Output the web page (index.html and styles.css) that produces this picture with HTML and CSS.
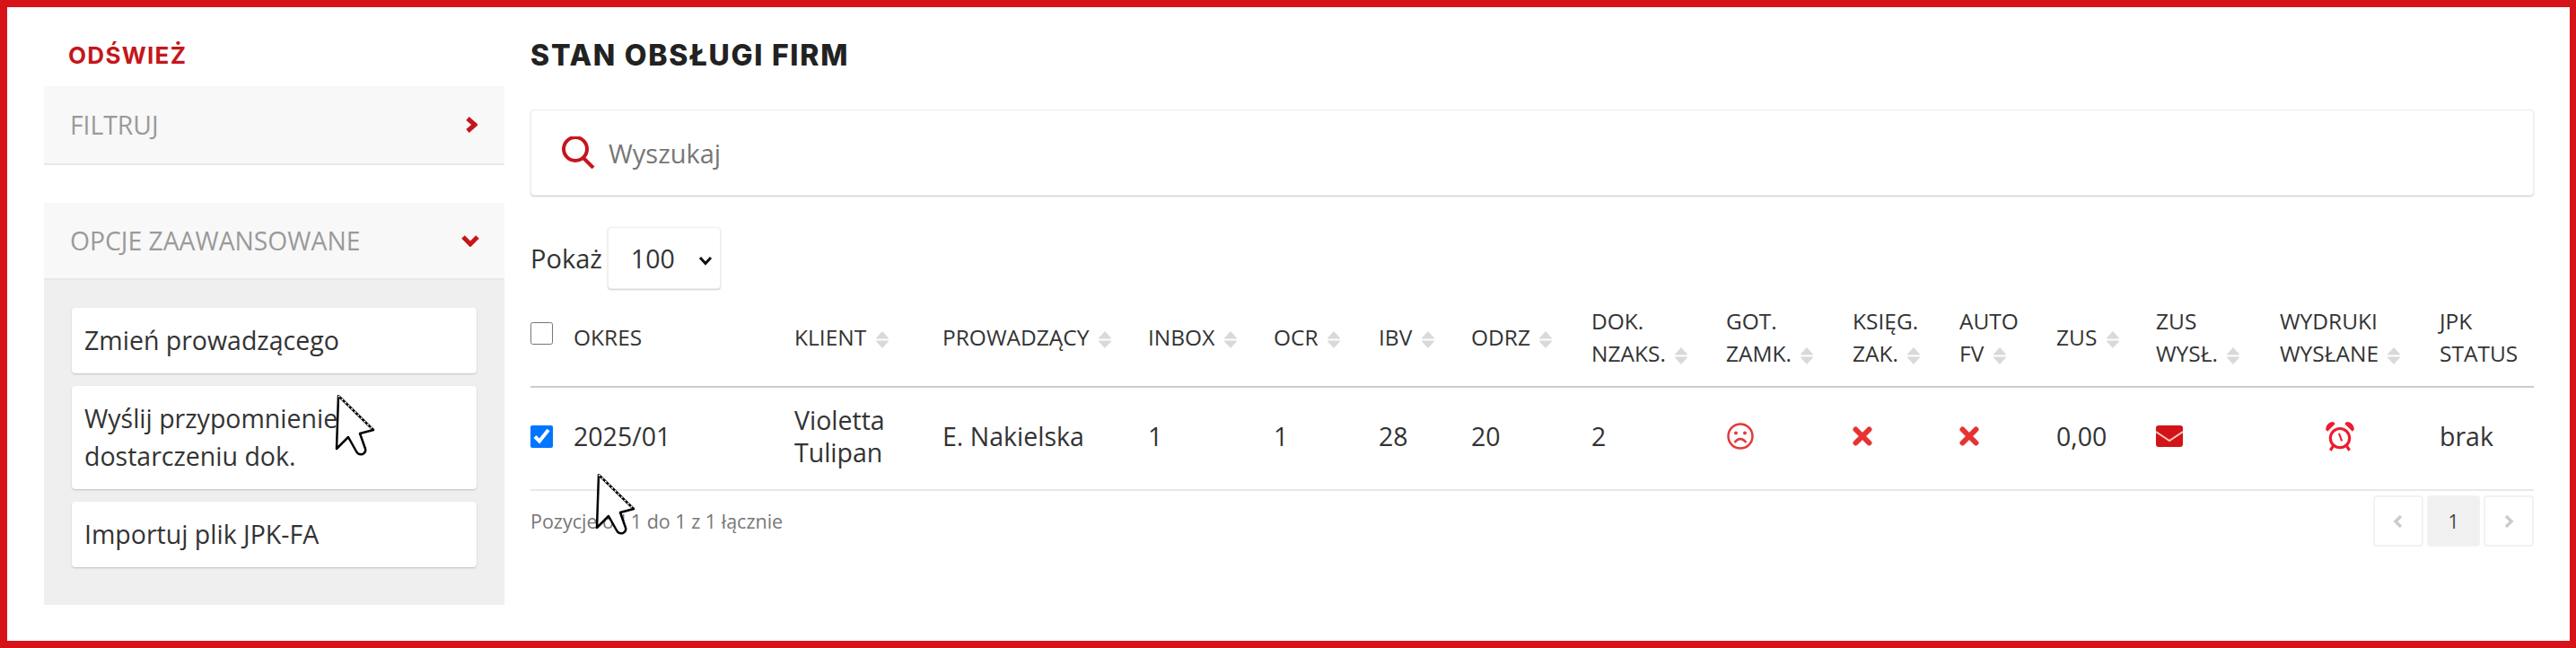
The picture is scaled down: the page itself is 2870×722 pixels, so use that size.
FILE: index.html
```html
<!DOCTYPE html>
<html lang="pl">
<head>
  <meta charset="UTF-8">
  <meta name="viewport" content="width=device-width, initial-scale=1.0">
  <title>Stan obsługi firm</title>
  <link rel="stylesheet" href="styles.css">
</head>
<body>
  <svg class="defs" width="0" height="0" aria-hidden="true">
    <symbol id="sort" viewBox="0 0 15 20">
      <path d="M7.5 1 L14 8 Q14.5 9 13.500 9 L1.500 9 Q.5 9 1 8 Z M1.500 11 L13.500 11 Q14.500 11 14 12 L7.500 19 L1 12 Q.5 11 1.500 11 Z"/>
    </symbol>
    <symbol id="cross" viewBox="0 0 22 22">
      <path d="M3.500 3.500 L18.500 18.500 M18.500 3.500 L3.500 18.500" fill="none" stroke="currentColor" stroke-width="6" stroke-linecap="round"/>
    </symbol>
    <symbol id="cursor" viewBox="0 0 46 68">
      <path d="M4 1 L2 60 L15 47 L24 63 Q26 67 31 66 Q35 64 34 60 L28 43 L43 39 Z" fill="#fff" stroke="#000" stroke-width="2.500" stroke-linejoin="round"/>
      <path d="M4 1 L43 39" fill="none" stroke="#fff" stroke-width="1.500" stroke-dasharray="2 3"/>
    </symbol>
  </svg>

  <div class="frame">
    <aside class="sidebar">
      <a class="refresh">ODŚWIEŻ</a>

      <div class="panel-head panel-filter">
        <span>FILTRUJ</span>
        <svg class="chevron" width="14" height="18" viewBox="0 0 14 18"><path d="M3 2 L11 9 L3 16" fill="none" stroke="currentColor" stroke-width="5"/></svg>
      </div>

      <div class="panel-head">
        <span>OPCJE ZAAWANSOWANE</span>
        <svg class="chevron chevron-down" width="20" height="14" viewBox="0 0 20 14"><path d="M2 3 L10 11 L18 3" fill="none" stroke="currentColor" stroke-width="5"/></svg>
      </div>
      <div class="panel-body">
        <button class="side-btn" type="button">Zmień prowadzącego</button>
        <button class="side-btn" type="button">Wyślij przypomnienie o dostarczeniu dok.</button>
        <button class="side-btn" type="button">Importuj plik JPK-FA</button>
      </div>
    </aside>

    <main class="content">
      <h1 class="title">STAN OBSŁUGI FIRM</h1>

      <div class="search">
        <svg class="search-icon" width="38" height="36" viewBox="0 0 38 36">
          <circle cx="16" cy="14" r="13" fill="none" stroke="currentColor" stroke-width="4"/>
          <path d="M25 24 L36 35" fill="none" stroke="currentColor" stroke-width="4"/>
        </svg>
        <input class="search-input" type="text" placeholder="Wyszukaj">
      </div>

      <div class="page-size">
        <label for="pageSize">Pokaż</label>
        <select id="pageSize">
          <option>100</option>
        </select>
      </div>

      <table class="grid">
        <colgroup>
          <col class="c-check"><col class="c-okres"><col class="c-klient"><col class="c-prow">
          <col class="c-inbox"><col class="c-ocr"><col class="c-ibv"><col class="c-odrz">
          <col class="c-dok"><col class="c-got"><col class="c-ksieg"><col class="c-auto">
          <col class="c-zus"><col class="c-wysl"><col class="c-wydr"><col class="c-jpk">
        </colgroup>
        <thead>
          <tr>
            <th><input class="check" type="checkbox"></th>
            <th>OKRES</th>
            <th>KLIENT <svg class="sort"><use href="#sort"/></svg></th>
            <th>PROWADZĄCY <svg class="sort"><use href="#sort"/></svg></th>
            <th>INBOX <svg class="sort"><use href="#sort"/></svg></th>
            <th>OCR <svg class="sort"><use href="#sort"/></svg></th>
            <th>IBV <svg class="sort"><use href="#sort"/></svg></th>
            <th>ODRZ <svg class="sort"><use href="#sort"/></svg></th>
            <th>DOK.<br>NZAKS. <svg class="sort"><use href="#sort"/></svg></th>
            <th>GOT.<br>ZAMK. <svg class="sort"><use href="#sort"/></svg></th>
            <th>KSIĘG.<br>ZAK. <svg class="sort"><use href="#sort"/></svg></th>
            <th>AUTO<br>FV <svg class="sort"><use href="#sort"/></svg></th>
            <th>ZUS <svg class="sort"><use href="#sort"/></svg></th>
            <th>ZUS<br>WYSŁ. <svg class="sort"><use href="#sort"/></svg></th>
            <th>WYDRUKI<br>WYSŁANE <svg class="sort"><use href="#sort"/></svg></th>
            <th>JPK<br>STATUS</th>
          </tr>
        </thead>
        <tbody>
          <tr>
            <td><input class="check" type="checkbox" checked></td>
            <td>2025/01</td>
            <td>Violetta Tulipan</td>
            <td>E. Nakielska</td>
            <td>1</td>
            <td>1</td>
            <td>28</td>
            <td>20</td>
            <td>2</td>
            <td>
              <svg class="icon-face" width="32" height="32" viewBox="0 0 32 32">
                <circle cx="16" cy="16" r="13.500" fill="none" stroke="currentColor" stroke-width="2.500"/>
                <circle cx="11" cy="12.500" r="2" fill="currentColor"/>
                <circle cx="21" cy="12.500" r="2" fill="currentColor"/>
                <path d="M9.500 23 Q16 15 22.500 23" fill="none" stroke="currentColor" stroke-width="2.500"/>
              </svg>
            </td>
            <td><svg class="icon-cross" width="22" height="22"><use href="#cross"/></svg></td>
            <td><svg class="icon-cross" width="22" height="22"><use href="#cross"/></svg></td>
            <td>0,00</td>
            <td>
              <svg class="icon-mail" width="30" height="24" viewBox="0 0 30 24">
                <rect width="30" height="24" rx="3" fill="currentColor"/>
                <path d="M0 7 L15 17 L30 7" fill="none" stroke="#f7c7b6" stroke-width="2"/>
              </svg>
            </td>
            <td class="cell-alarm">
              <svg class="icon-alarm" width="34" height="34" viewBox="0 0 32 32">
                <circle cx="16" cy="18" r="10" fill="none" stroke="currentColor" stroke-width="3"/>
                <path d="M1 9 Q2 1 9 1 L11 3 L3 11 Z M31 9 Q30 1 23 1 L21 3 L29 11 Z" fill="currentColor"/>
                <path d="M15 13 L18 21" fill="none" stroke="currentColor" stroke-width="2"/>
                <path d="M9 26 L6 31 M23 26 L26 31" fill="none" stroke="currentColor" stroke-width="3"/>
              </svg>
            </td>
            <td>brak</td>
          </tr>
        </tbody>
      </table>

      <div class="table-foot">
        <span class="info">Pozycje od 1 do 1 z 1 łącznie</span>
        <nav class="pager">
          <span class="page-btn page-prev">
            <svg width="12" height="16" viewBox="0 0 12 16"><path d="M9 2 L3 8 L9 14" fill="none" stroke="currentColor" stroke-width="3.500"/></svg>
          </span>
          <span class="page-btn page-current">1</span>
          <span class="page-btn">
            <svg width="12" height="16" viewBox="0 0 12 16"><path d="M3 2 L9 8 L3 14" fill="none" stroke="currentColor" stroke-width="3.500"/></svg>
          </span>
        </nav>
      </div>
    </main>

    <svg class="pointer pointer-side" width="46" height="68"><use href="#cursor"/></svg>
    <svg class="pointer pointer-table" width="46" height="68"><use href="#cursor"/></svg>
  </div>
</body>
</html>
```

FILE: styles.css
```css
* {
  box-sizing: border-box;
}

body {
  margin: 0;
  background: #fff;
  color: #333;
  font-family: "Open Sans", "Liberation Sans", sans-serif;
  font-size: 28.5px;
}

.defs {
  position: absolute;
}

.frame {
  position: relative;
  display: flex;
  gap: 29px;
  height: 722px;
  padding: 40px 40px 0 41px;
  border: 8px solid #d7131a;
  border-right-width: 7px;
  overflow: hidden;
}

/* sidebar */
.sidebar {
  flex: 0 0 513px;
}

.refresh {
  display: block;
  height: 28px;
  margin-bottom: 20px;
  padding-left: 27px;
  color: #c5161c;
  font-family: Inter, sans-serif;
  font-size: 26px;
  font-weight: 700;
  letter-spacing: 1.3px;
  line-height: 28px;
}

.panel-head {
  display: flex;
  align-items: center;
  justify-content: space-between;
  height: 86px;
  padding: 0 30px 0 29px;
  background: #f8f8f8;
  border-bottom: 2px solid #e8e8e8;
  color: #9a9a9a;
  font-size: 28.3px;
}

.panel-filter {
  height: 88px;
  margin-bottom: 42px;
}

.chevron {
  color: #c5161c;
}

.chevron-down {
  margin-right: -2px;
}

.panel-body {
  display: flex;
  flex-direction: column;
  gap: 14px;
  height: 362px;
  padding: 31px 31px 0;
  background: #efefef;
}

.side-btn {
  min-height: 73px;
  padding: 15px 14px 16px;
  background: #fff;
  border: 0;
  border-radius: 4px;
  box-shadow: 0 1px 2px rgba(0, 0, 0, 0.2);
  color: #333;
  font-family: inherit;
  font-size: 28.5px;
  line-height: 42px;
  text-align: left;
}

/* main column */
.content {
  flex: 1;
  min-width: 0;
}

.title {
  height: 28px;
  margin: 0 0 46px;
  color: #222;
  font-family: Inter, sans-serif;
  font-size: 32px;
  font-weight: 800;
  letter-spacing: 1.75px;
  line-height: 28px;
}

.search {
  display: flex;
  align-items: center;
  gap: 13px;
  height: 96px;
  padding-left: 33px;
  background: #fff;
  border: 1px solid #eee;
  border-radius: 4px;
  box-shadow: 0 1px 2px rgba(0, 0, 0, 0.2);
}

.search-icon {
  color: #c5161c;
}

.search-input {
  flex: 1;
  border: 0;
  outline: 0;
  color: #333;
  font-family: inherit;
  font-size: 29px;
}

.search-input::placeholder {
  color: #777;
}

.page-size {
  display: flex;
  align-items: center;
  gap: 6px;
  height: 69px;
  margin-top: 35px;
  font-size: 29px;
}

.page-size select {
  width: 126px;
  height: 69px;
  padding-left: 25px;
  appearance: none;
  background: #fff url("data:image/svg+xml,%3Csvg xmlns='http://www.w3.org/2000/svg' width='16' height='11'%3E%3Cpath d='M2 2 L8 8.500 L14 2' fill='none' stroke='%23111' stroke-width='3'/%3E%3C/svg%3E") no-repeat 100px 31px;
  border: 1px solid #eee;
  border-radius: 4px;
  box-shadow: 0 1px 2px rgba(0, 0, 0, 0.2);
  color: #333;
  font-family: inherit;
  font-size: 28.5px;
}

/* table */
.grid {
  width: 100%;
  border-collapse: collapse;
  table-layout: fixed;
}

.c-check { width: 48px; }
.c-okres { width: 246px; }
.c-klient { width: 165px; }
.c-prow { width: 229px; }
.c-inbox { width: 140px; }
.c-ocr { width: 117px; }
.c-ibv { width: 103px; }
.c-odrz { width: 134px; }
.c-dok { width: 150px; }
.c-got { width: 141px; }
.c-ksieg { width: 119px; }
.c-auto { width: 108px; }
.c-zus { width: 111px; }
.c-wysl { width: 138px; }
.c-wydr { width: 178px; }
.c-jpk { width: 105px; }

.grid th {
  height: 109px;
  padding: 0;
  border-bottom: 2px solid #ccc;
  font-size: 24.5px;
  font-weight: 400;
  line-height: 36px;
  text-align: left;
  white-space: nowrap;
}

.grid td {
  height: 115px;
  padding: 0 0 5px;
  border-bottom: 2px solid #e8e8e8;
  line-height: 36px;
  vertical-align: middle;
}

.sort {
  width: 16px;
  height: 21px;
  margin-left: 3px;
  fill: #d9d9d9;
  vertical-align: -4px;
}

.check {
  display: block;
  width: 25px;
  height: 25px;
  margin: 0;
}

.grid th .check {
  margin-bottom: 9px;
}

.grid td svg {
  display: block;
}

.icon-face {
  color: #e33a3a;
}

.icon-cross {
  color: #e63232;
}

.icon-mail {
  color: #d2131a;
}

.icon-alarm {
  color: #ed1c2e;
  margin-left: 50px;
}

/* footer */
.table-foot {
  display: flex;
  align-items: center;
  justify-content: space-between;
  margin-top: 5px;
}

.info {
  color: #777;
  font-size: 21.5px;
}

.pager {
  display: flex;
  gap: 4px;
}

.page-btn {
  display: flex;
  align-items: center;
  justify-content: center;
  width: 56px;
  height: 57px;
  background: #fff;
  border: 2px solid #f2f2f2;
  border-radius: 4px;
  color: #ccc;
  font-size: 21px;
}

.page-current {
  width: 59px;
  background: #f0f0f0;
  color: #444;
}

/* mouse pointers caught in the capture */
.pointer {
  position: absolute;
}

.pointer-side {
  top: 432px;
  left: 365px;
}

.pointer-table {
  top: 520px;
  left: 655px;
}
```
